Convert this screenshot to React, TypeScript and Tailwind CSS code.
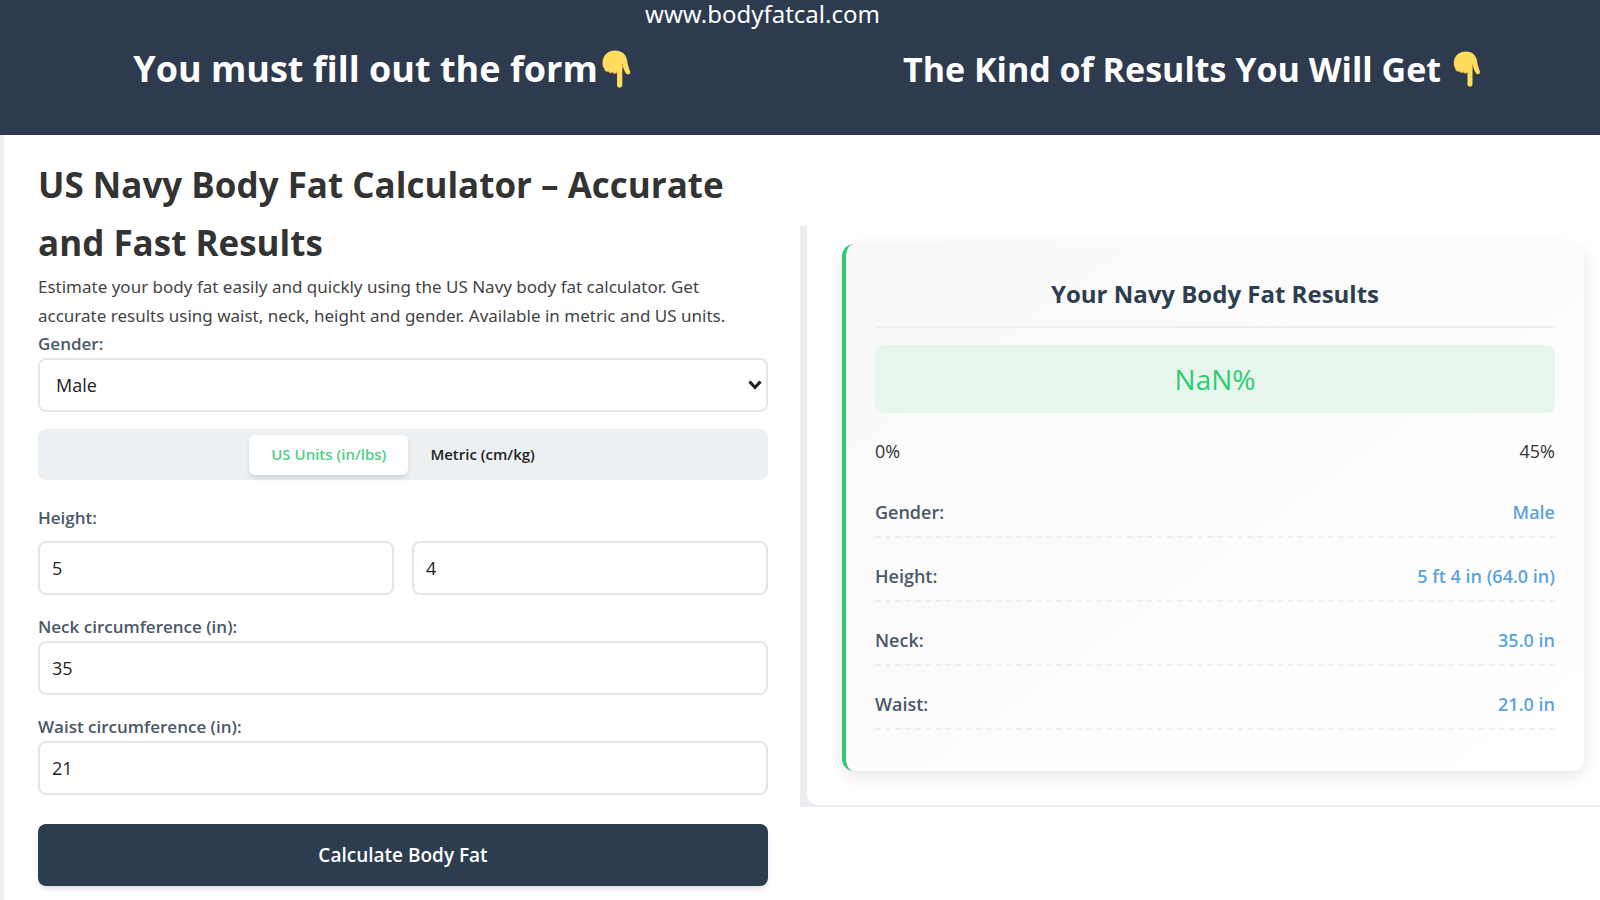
import { useState } from 'react';
import type { ReactNode } from 'react';

const PointDown = ({ className }: { className: string }) => (
  <svg viewBox="0 0 29 38" className={className} role="img" aria-label="Pointing down">
    <path
      fill="#ffdb5e"
      d="M0.500 13C0.500 5 6.500 0.500 13 0.500C19.500 0.500 24 4 25 10C25.500 14 26.500 17 28 21C29 24.500 26 25.500 24 23.500C22.200 21.500 21.500 18 20.300 14.500V35C20.300 38.500 15 38.500 15 35V22.500C13.500 24 11.500 24 10.500 22C9 23.500 7 23 6.500 21.200C4.500 22.200 2.500 21 2.500 19C1 17 0.500 15.500 0.500 13Z"
    />
    <path
      fill="none"
      stroke="#ee9547"
      strokeWidth="0.8"
      strokeLinecap="round"
      d="M15 22.500C13.500 24 11.500 24 10.500 22C9 23.500 7 23 6.500 21.200C4.500 22.200 3 21 2.500 19.500M20.500 19V14"
    />
  </svg>
);

const inputClass =
  'h-[54px] w-full rounded-lg border-2 border-[#e4e5e7] bg-white px-3 text-lg text-[#222] outline-none';

interface FieldProps {
  id: string;
  label: string;
  children: ReactNode;
}

const Field = ({ id, label, children }: FieldProps) => (
  <div>
    <label htmlFor={id} className="block text-[17px] leading-7 font-semibold text-[#4a5869]">
      {label}
    </label>
    {children}
  </div>
);

const results = [
  { label: 'Gender:', value: 'Male' },
  { label: 'Height:', value: '5 ft 4 in (64.0 in)' },
  { label: 'Neck:', value: '35.0 in' },
  { label: 'Waist:', value: '21.0 in' },
];

const App = () => {
  const [gender, setGender] = useState('Male');
  const [units, setUnits] = useState('us');
  const [feet, setFeet] = useState('5');
  const [inches, setInches] = useState('4');
  const [neck, setNeck] = useState('35');
  const [waist, setWaist] = useState('21');

  return (
    <div className="flex min-h-screen flex-col bg-white font-['Open_Sans',sans-serif] text-[#333]">
      {/* Banner */}
      <header className="h-[135px] bg-[#2e3a4e] text-white">
        <a href="#" className="block pr-[75px] text-center font-['Noto_Sans',sans-serif] text-2xl leading-7">
          www.bodyfatcal.com
        </a>
        <div className="grid grid-cols-2 pt-[17px] font-bold">
          <h2 className="flex h-12 items-center justify-center pr-9 text-4xl">
            You must fill out the form
            <PointDown className="ml-1 h-[38px] w-[29px]" />
          </h2>
          <h2 className="flex h-12 items-center justify-center pr-9 pl-5 text-[34px]">
            The Kind of Results You Will Get
            <PointDown className="ml-3 h-9 w-7" />
          </h2>
        </div>
      </header>

      <main className="grid grow grid-cols-2">
        {/* Form */}
        <form
          onSubmit={(e) => e.preventDefault()}
          className="border-l-4 border-[#ebedf1] pt-[21px] pr-8 pl-[34px]"
        >
          <h1 className="text-[35px] leading-[58px] font-bold">
            US Navy Body Fat Calculator – Accurate and Fast Results
          </h1>
          <p className="pr-8 font-['Noto_Sans',sans-serif] text-[17px] leading-[29px] text-[#444]">
            Estimate your body fat easily and quickly using the US Navy body fat calculator. Get
            accurate results using waist, neck, height and gender. Available in metric and US units.
          </p>

          <Field id="gender" label="Gender:">
            <div className="relative">
              <select
                id="gender"
                value={gender}
                onChange={(e) => setGender(e.target.value)}
                className="h-[54px] w-full appearance-none rounded-lg border-2 border-[#e4e5e7] bg-white px-4 text-lg text-[#222] outline-none"
              >
                <option>Male</option>
                <option>Female</option>
              </select>
              <svg viewBox="0 0 14 10" className="pointer-events-none absolute top-[22px] right-[6px] w-[14px]">
                <path d="M1.500 1.500L7 7.500L12.500 1.500" fill="none" stroke="#222" strokeWidth="3.200" />
              </svg>
            </div>
          </Field>

          <div className="mt-[17px] flex h-[51px] items-center justify-center rounded-lg bg-[#ecf0f3] text-[15px] font-semibold">
            <button
              type="button"
              onClick={() => setUnits('us')}
              className={`h-10 rounded-md px-[22px] ${units === 'us' ? 'bg-white text-[#4fd087] shadow-md' : 'text-[#222]'}`}
            >
              US Units (in/lbs)
            </button>
            <button
              type="button"
              onClick={() => setUnits('metric')}
              className={`h-10 rounded-md px-[22px] ${units === 'metric' ? 'bg-white text-[#4fd087] shadow-md' : 'text-[#222]'}`}
            >
              Metric (cm/kg)
            </button>
          </div>

          <fieldset className="mt-6">
            <legend className="mb-[9px] text-[17px] leading-7 font-semibold text-[#4a5869]">Height:</legend>
            <div className="grid grid-cols-2 gap-[18px]">
              <input aria-label="Feet" value={feet} onChange={(e) => setFeet(e.target.value)} className={inputClass} />
              <input aria-label="Inches" value={inches} onChange={(e) => setInches(e.target.value)} className={inputClass} />
            </div>
          </fieldset>

          <div className="mt-[18px] grid gap-[18px]">
            <Field id="neck" label="Neck circumference (in):">
              <input id="neck" value={neck} onChange={(e) => setNeck(e.target.value)} className={inputClass} />
            </Field>
            <Field id="waist" label="Waist circumference (in):">
              <input id="waist" value={waist} onChange={(e) => setWaist(e.target.value)} className={inputClass} />
            </Field>
          </div>

          <button
            type="submit"
            className="mt-[29px] h-[62px] w-full rounded-lg bg-[#2d3d50] text-[19px] font-semibold text-white shadow-md"
          >
            Calculate Body Fat
          </button>
        </form>

        {/* Results */}
        <section className="mt-[91px] self-start bg-[#ebedf1] pl-[7px]">
          <div className="rounded-bl-xl border-b-2 border-[#ebedf1] bg-white pt-[18px] pr-4 pb-[34px] pl-[35px]">
            <div className="rounded-xl border-l-4 border-[#2ecc71] bg-linear-to-br from-[#f9f9f9] to-white px-[29px] pt-[30px] pb-[41px] shadow-[0_5px_15px_rgba(0,0,0,0.1)]">
              <h2 className="border-b-2 border-[#ecf0f1] pb-3 text-center text-2xl leading-10 font-bold text-[#2c3e50]">
                Your Navy Body Fat Results
              </h2>
              <div className="mt-[17px] flex h-[68px] items-center justify-center rounded-lg bg-[#e6f6ec] text-[28px] text-[#2ecc71]">
                NaN%
              </div>
              <div className="mt-6 mb-2 flex justify-between text-lg leading-[29px]">
                <span>0%</span>
                <span>45%</span>
              </div>
              <dl className="text-lg leading-[29px] font-semibold">
                {results.map(({ label, value }) => (
                  <div
                    key={label}
                    className="flex h-16 items-end justify-between border-b-2 border-dashed border-[#ecf0f1] pb-[9px]"
                  >
                    <dt className="text-[#4a5869]">{label}</dt>
                    <dd className="text-[#5ba4db]">{value}</dd>
                  </div>
                ))}
              </dl>
            </div>
          </div>
        </section>
      </main>
    </div>
  );
};

export default App;
